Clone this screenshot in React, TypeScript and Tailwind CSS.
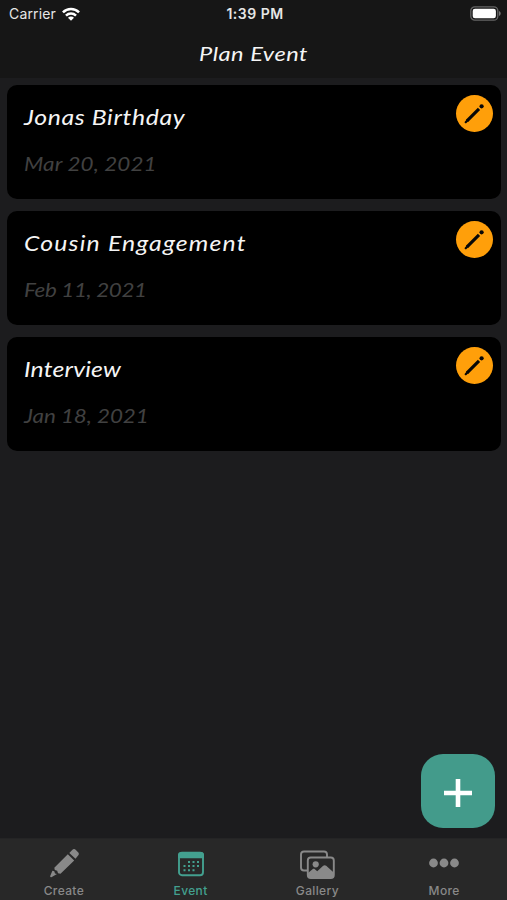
import type { ReactNode } from "react";

const events = [
  { title: "Jonas Birthday", date: "Mar 20, 2021", titleClass: "tracking-[0.55px]", dateClass: "tracking-[0.1px]" },
  { title: "Cousin Engagement", date: "Feb 11, 2021", titleClass: "tracking-[1px]", dateClass: "tracking-[-0.3px]" },
  { title: "Interview", date: "Jan 18, 2021", titleClass: "tracking-[0.15px]", dateClass: "tracking-[-0.05px]" },
];

const script = "font-['Bradley_Hand','Lato',sans-serif] italic";

function StatusBar() {
  return (
    <div className="grid h-[27px] grid-cols-3 items-center pl-[9px] pr-[6px] text-[14px] text-[#e6e6e6]">
      <div className="flex items-center gap-[6px]">
        <span className="tracking-[0.15px]">Carrier</span>
        <svg width="18" height="14" viewBox="0 0 19 14" fill="none" stroke="#fff" strokeWidth="2.7">
          <path d="M1 5.2C5.8.5 13.2.5 18 5.2" />
          <path d="M4.2 8.7c3-2.9 7.6-2.9 10.6 0" />
          <path d="M9.5 14 6.3 10.9c1.8-1.600 4.600-1.600 6.400 0z" fill="#fff" stroke="none" />
        </svg>
      </div>
      <span className="whitespace-nowrap text-center font-semibold tracking-[0.5px]">1:39 PM</span>
      <svg className="justify-self-end" width="31" height="15" viewBox="0 0 31 15">
        <rect x="0.8" y="0.8" width="27" height="13.4" rx="4" fill="none" stroke="#656565" strokeWidth="1.3" />
        <rect x="2.7" y="2.7" width="23.2" height="9.6" rx="2.3" fill="#fff" />
        <path d="M29 5v5c1-.4 1.7-1.3 1.7-2.5S30 5.4 29 5z" fill="#757575" />
      </svg>
    </div>
  );
}

function EventCard({ title, date, titleClass, dateClass }: (typeof events)[number]) {
  return (
    <article className="flex h-[114px] justify-between rounded-[10px] bg-black pl-[17px] pr-2">
      <div className={`${script} origin-left scale-x-[1.18] pt-[18px]`}>
        <h2 className={`text-[21px] leading-7 text-[#f5f5f5] ${titleClass}`}>{title}</h2>
        <p className={`mt-[19px] text-[19px] leading-7 text-[#414141] ${dateClass}`}>{date}</p>
      </div>
      <button aria-label="Edit" className="mt-[10px] flex size-[37px] items-center justify-center rounded-full bg-[#ff9f0a]">
        <svg width="21" height="21" viewBox="0 0 21 21" fill="none" stroke="#080808">
          <path d="M3 17.800 15 5.800" strokeWidth="3.2" />
          <path d="m1.700 19.200 1.800-1.800" strokeWidth="2.2" strokeLinecap="round" />
          <circle cx="17.600" cy="3.300" r="2.100" fill="#080808" stroke="none" />
        </svg>
      </button>
    </article>
  );
}

function Tab({ label, active, children }: { label: string; active?: boolean; children: ReactNode }) {
  return (
    <button className={`flex flex-col items-center pl-px pt-[7px] ${active ? "text-[#43a08f]" : "text-[#898989]"}`}>
      <span className="flex h-[33px] items-center">{children}</span>
      <span className="mt-1 text-[12px] leading-4 tracking-[0.35px] font-medium">{label}</span>
    </button>
  );
}

export default function App() {
  return (
    <main className="flex h-[900px] w-[507px] flex-col overflow-hidden bg-[#1c1c1e] font-['Inter',sans-serif]">
      <header className="h-[78px] bg-[#161616]">
        <StatusBar />
        <h1 className={`${script} mt-3 scale-x-[1.18] text-center text-[20px] leading-7 tracking-[0.45px] text-[#f5f5f5]`}>Plan Event</h1>
      </header>

      {/* Event list */}
      <section className="flex flex-1 flex-col gap-3 pl-[7px] pr-[6px] pt-[7px]">
        {events.map((event) => (
          <EventCard key={event.title} {...event} />
        ))}
        <button aria-label="Add event" className="mb-[10px] mr-[6px] mt-auto flex size-[74px] items-center justify-center self-end rounded-[22px] bg-[#439b8b] pt-[3px]">
          <svg width="28" height="28" viewBox="0 0 28 28" stroke="#fff" strokeWidth="4.6">
            <path d="M14 0v28M0 14h28" />
          </svg>
        </button>
      </section>

      {/* Bottom tabs */}
      <nav className="grid h-[62px] grid-cols-4 border-t border-[#242425] bg-[#282828]">
        <Tab label="Create">
          <svg width="32" height="32" viewBox="0 0 32 32" fill="currentColor">
            <path d="M6.3 20.700 19.800 7.200l6.400 6.300-13.700 13.300-2.500-.5-.8-2.500-2.400-.7z" />
            <path d="m21.300 5.900 2.900-2.900c1.200-1.200 2.500-1.200 3.700 0l2.200 2.200c1 1.100 1 2.300 0 3.400l-2.600 3.200z" />
            <path d="m4.4 23.700 1.900.6.7 2.200 2 .5-5.200 3c-1.200.5-1.900 0-1.500-1.200z" />
          </svg>
        </Tab>
        <Tab label="Event" active>
          <svg className="mt-[3px]" width="28" height="26" viewBox="0 0 28 26" fill="currentColor">
            <rect x="2" y="1.8" width="24" height="22.5" rx="3" fill="none" stroke="currentColor" strokeWidth="1.9" />
            <path d="M4 1h20q3 0 3 3v3.2H1V4q0-3 3-3z" />
            <path d="M11 10h2v2h-2zm4.5 0h2v2h-2zm4.5 0h2v2h-2zM6.5 14h2v2h-2zm4.5 0h2v2h-2zm4.5 0h2v2h-2zm4.5 0h2v2h-2zM6.5 18.300h2v2h-2zm4.500 0h2v2h-2zm4.500 0h2v2h-2z" />
          </svg>
        </Tab>
        <Tab label="Gallery">
          <svg className="mt-[5px]" width="36" height="30" viewBox="0 0 36 30" fill="none" stroke="currentColor" strokeWidth="1.9">
            <path d="M28 7V4.500q0-3-3-3H5q-3 0-3 3v13q0 3 3 3h3" />
            <rect x="8.8" y="7.5" width="26" height="20.5" rx="3" />
            <circle cx="16.7" cy="14.3" r="3.1" fill="currentColor" stroke="none" />
            <path d="m9 23 4.500-3.700c.8-.6 1.600-.6 2.400 0l2.300 2 6-5.500c1-.9 2-.9 3 0l7.500 6.700V26q0 2-2 2H11q-2 0-2-2z" fill="currentColor" stroke="none" />
          </svg>
        </Tab>
        <Tab label="More">
          <svg width="32" height="12" viewBox="0 0 32 12" fill="currentColor">
            <circle cx="5.5" cy="6" r="4.4" />
            <circle cx="16" cy="6" r="4.4" />
            <circle cx="26.5" cy="6" r="4.4" />
          </svg>
        </Tab>
      </nav>
    </main>
  );
}
